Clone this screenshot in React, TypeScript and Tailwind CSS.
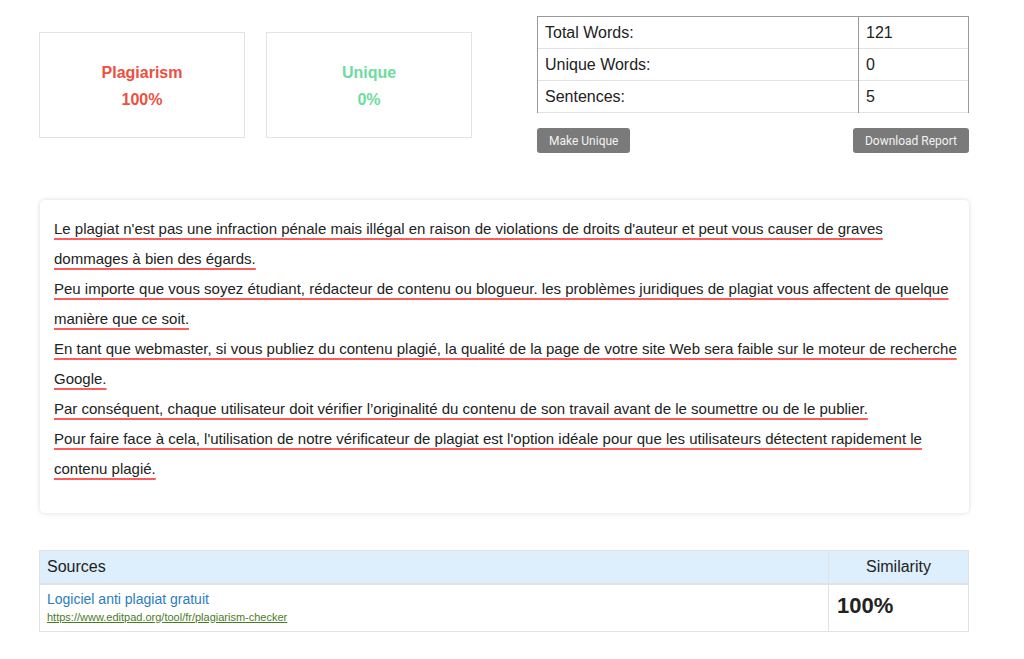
import React from "react";

const sentences = [
  ["Le plagiat n'est pas une infraction pénale mais illégal en raison de violations de droits d'auteur et peut vous causer de graves", "dommages à bien des égards."],
  ["Peu importe que vous soyez étudiant, rédacteur de contenu ou blogueur. les problèmes juridiques de plagiat vous affectent de quelque manière que ce soit."],
  ["En tant que webmaster, si vous publiez du contenu plagié, la qualité de la page de votre site Web sera faible sur le moteur de recherche Google."],
  ["Par conséquent, chaque utilisateur doit vérifier l’originalité du contenu de son travail avant de le soumettre ou de le publier."],
  ["Pour faire face à cela, l'utilisation de notre vérificateur de plagiat est l'option idéale pour que les utilisateurs détectent rapidement le contenu plagié."],
];

const stats = [
  { label: "Total Words:", value: "121" },
  { label: "Unique Words:", value: "0" },
  { label: "Sentences:", value: "5" },
];

function ScoreBox({ title, value, color }: { title: string; value: string; color: string }) {
  return (
    <div className="w-[206px] h-[106px] border border-[#e3e3e3] flex flex-col items-center justify-center pt-[2px] font-bold text-[16px] leading-[27px]">
      <span className={color}>{title}</span>
      <span className={color}>{value}</span>
    </div>
  );
}

export default function App() {
  return (
    <div className="min-h-[659px] bg-white text-[#222] font-['Liberation_Sans',Arial,sans-serif]">
      <div className="w-[930px] ml-[39px] pt-[16px]">
        {/* top row */}
        <div className="flex">
          <div className="flex gap-[21px] pt-[16px]">
            <ScoreBox title="Plagiarism" value="100%" color="text-[#ee5040]" />
            <ScoreBox title="Unique" value="0%" color="text-[#6ddc9c]" />
          </div>
          <div className="ml-auto w-[432px]">
            <table className="w-full border-collapse text-[16px] border-t border-[#999]">
              <tbody>
                {stats.map((s) => (
                  <tr key={s.label} className="h-[32px] border-b border-[#e2e2e2]">
                    <td className="border-l border-[#999] px-[7px] pt-[1px]">{s.label}</td>
                    <td className="w-[110px] border-l border-r border-[#999] px-[7px] pt-[1px]">{s.value}</td>
                  </tr>
                ))}
              </tbody>
            </table>
            <div className="flex justify-between mt-[15px]">
              <button className="h-[25px] px-[12px] rounded-[3px] bg-[#7a7a7a] text-[#f2f2f2] text-[12px] font-['Roboto',sans-serif]">
                Make Unique
              </button>
              <button className="h-[25px] px-[12px] rounded-[3px] bg-[#7a7a7a] text-[#f2f2f2] text-[12px] font-['Roboto',sans-serif]">
                Download Report
              </button>
            </div>
          </div>
        </div>

        {/* text card */}
        <div className="mt-[47px] ml-[1px] rounded-[5px] bg-white shadow-[0_0_5px_rgba(0,0,0,0.15)] pl-[14px] pr-[8px] pt-[14px] pb-[29px] text-[15px] leading-[30px]">
          {sentences.map((parts, i) => (
            <React.Fragment key={i}>
              <span className="underline decoration-[#ff5b5b] decoration-2 underline-offset-[4px]">
                {parts.map((p, j) => (
                  <React.Fragment key={j}>
                    {j > 0 && <br />}
                    {p}
                  </React.Fragment>
                ))}
              </span>
              {i < sentences.length - 1 && <br />}
            </React.Fragment>
          ))}
        </div>

        {/* sources table */}
        <table className="mt-[37px] w-full border-collapse border border-[#e2e2e2]">
          <thead>
            <tr className="h-[33px] bg-[#ddeefc] text-[16px]">
              <th className="text-left font-normal px-[7px] pt-[1px] border-b-2 border-[#e2e2e2]">Sources</th>
              <th className="w-[140px] font-normal pt-[1px] border-l border-b-2 border-[#e2e2e2]">Similarity</th>
            </tr>
          </thead>
          <tbody>
            <tr className="h-[48px]">
              <td className="px-[7px] align-top pt-[6px]">
                <div className="text-[14px] leading-[17px] text-[#2a7dc0]">Logiciel anti plagiat gratuit</div>
                <div className="text-[11px] leading-[16px] mt-[1px] text-[#4a7c1f] underline">
                  https://www.editpad.org/tool/fr/plagiarism-checker
                </div>
              </td>
              <td className="border-l border-[#e2e2e2] px-[8px] pb-[4px] text-[22px] font-bold">100%</td>
            </tr>
          </tbody>
        </table>
      </div>
    </div>
  );
}
